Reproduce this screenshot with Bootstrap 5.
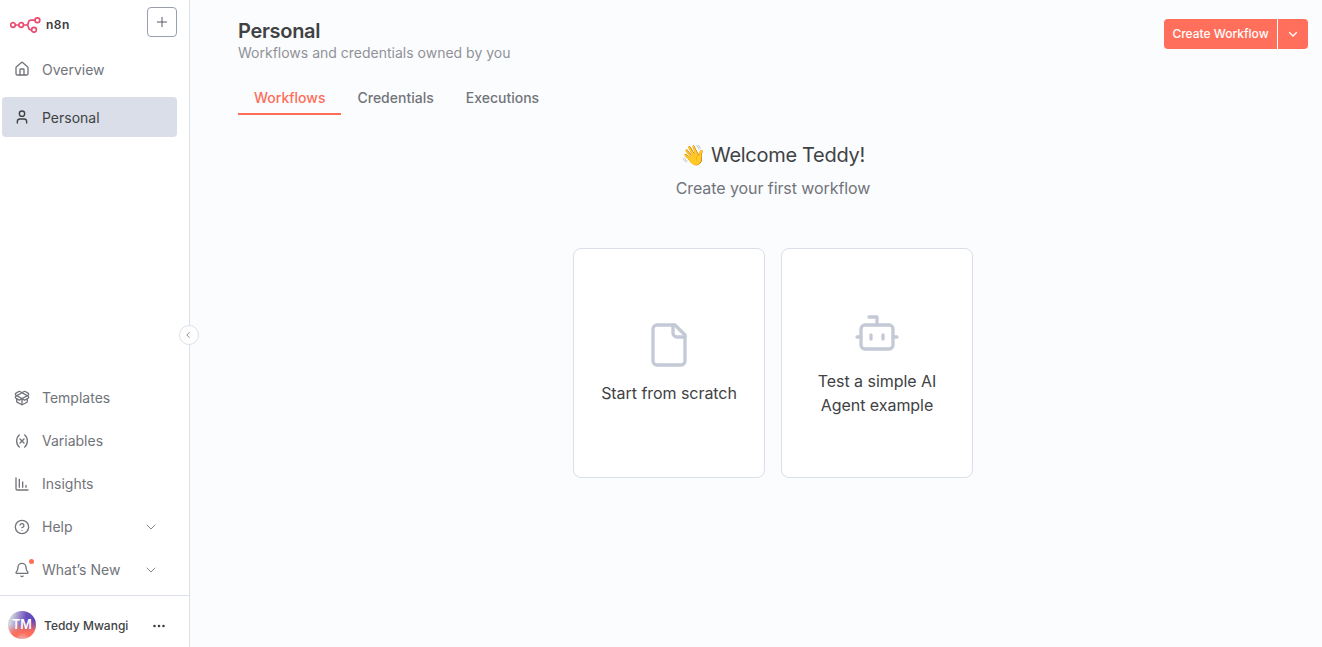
<!DOCTYPE html>
<html lang="en">
<head>
<meta charset="utf-8">
<meta name="viewport" content="width=device-width, initial-scale=1">
<title>n8n - Personal</title>
<link href="https://cdn.jsdelivr.net/npm/bootstrap@5.3.0/dist/css/bootstrap.min.css" rel="stylesheet">
<style>
body{font-family:Inter,"Noto Color Emoji",sans-serif;font-size:14px;line-height:20px;color:#414244;background:#fbfcfe;height:100vh;overflow:hidden}
svg{display:block;flex:none}
.ic{fill:none;stroke:currentColor;stroke-width:1.5;stroke-linecap:round;stroke-linejoin:round}
.side{width:190px;background:#fff;border-right:1px solid #dbdfe7}
.side .ic{stroke-width:2}
.side .chev{stroke-width:1.7}
.side-head{height:49px;padding:7px 12px 0 10px}
.brand-name{font-size:12px;font-weight:600;line-height:16px;letter-spacing:.5px;padding:2px 0 0 5px;color:#3a3b40}
.plus-btn{width:30px;height:30px;border:1px solid #9a9fac;border-radius:4px;background:#fff;color:#555a66;padding:0}
.plus-btn .ic{stroke-width:1.5}
.side-link{height:40px;margin-left:2px;width:175px;padding-left:12px;gap:12px;border-radius:4px;color:#71747a;text-decoration:none}
.side-top .side-link span{padding-top:2px}
.side-link.current{background:#dadee8;color:#414244}
.side-bottom{gap:3px;margin-bottom:5px}
.side-link .chev{margin-left:auto;margin-right:20px}
.dot{position:absolute;width:5px;height:5px;border-radius:50%;background:#ff6d5a;left:15px;top:-3px}
.user-row{height:52px;border-top:1px solid #dbdfe7;padding:7px 24px 0 8px;font-size:12px;font-weight:500}
.user-name,.user-row>svg{position:relative;top:1px}
.avatar{width:28px;height:28px;border-radius:50%;color:#fff;font-weight:600;font-size:12.5px;background:radial-gradient(circle at 52% 108%,#e3c3cb 0,rgba(255,109,90,.9) 26%,transparent 50%),linear-gradient(170deg,transparent 42%,#ff6d5a 78%),linear-gradient(100deg,#d5d6de 12%,#6b4fbb 58%,#5344ba)}
.collapse-btn{position:absolute;left:179px;top:325px;width:20px;height:20px;border:1px solid #dbdfe7;border-radius:50%;background:#fff;color:#71747a;padding:0 2px 0 0}
.main-area{padding:19px 14px 0 48px}
.page-title{font-size:20px;line-height:24px;font-weight:600;letter-spacing:-.3px;margin:0}
.sub{color:#909298}
.tabs-row{margin-top:20px;font-weight:500;color:#71747a}
.tab-item{height:32px;padding:5px 16px 0;border-bottom:2px solid transparent}
.tab-item.current{color:#ff6d5a;border-color:#ff6d5a}
.create{height:30px;gap:1px;font-size:12px}
.create button{border:0;background:#ff6f5c;color:#fff;font-weight:500}
.create button:first-child{width:113px;border-radius:4px 0 0 4px;padding:0}
.create button:last-child{width:30px;border-radius:0 4px 4px 0;padding:0}
.create .ic{stroke-width:2.5}
.welcome{font-size:20px;font-weight:400;line-height:26px;letter-spacing:-.3px;margin:27px 0 0}
.lead-in{font-size:16px;line-height:24px;letter-spacing:-.08px;color:#71747a;margin:8px 0 48px}
.start-card{width:192px;height:230px;border:1px solid #dbdfe7;border-radius:8px;background:#fff;font-size:16px;line-height:24px;letter-spacing:-.05px;gap:12px;padding:0 24px}
.start-card svg{color:#c4c9d6;stroke-width:1.65}
</style>
</head>
<body class="d-flex">
<aside class="side d-flex flex-column flex-shrink-0 position-relative">
  <div class="side-head d-flex justify-content-between align-items-start">
    <div class="d-flex align-items-center mt-2">
      <svg width="31" height="18" viewBox="0 0 31 18" fill="none" stroke="#ea4b71" stroke-width="1.7"><circle cx="3" cy="10" r="2.300"/><circle cx="11.200" cy="10" r="2.300"/><circle cx="27.400" cy="5.200" r="2.400"/><circle cx="24" cy="14.800" r="2.400"/><path d="M5.300 10h3.600M13.500 10h2.700c1.600 0 2-.8 2.200-2l.1-.8C18.800 5.600 19.600 5.200 21 5.200h4M16.200 10c1.600 0 2 .9 2.200 2.200.3 1.900.8 2.600 2.200 2.600h1"/></svg>
      <span class="brand-name">n8n</span>
    </div>
    <button class="plus-btn d-flex align-items-center justify-content-center" aria-label="Add"><svg class="ic" width="16" height="16" viewBox="0 0 24 24"><path d="M5 12h14M12 5v14"/></svg></button>
  </div>
  <nav class="side-top d-flex flex-column gap-2">
    <a class="side-link d-flex align-items-center"><svg class="ic" width="16" height="16" viewBox="0 0 24 24"><path d="M15 21v-8a1 1 0 0 0-1-1h-4a1 1 0 0 0-1 1v8"/><path d="M3 10a2 2 0 0 1 .709-1.528l7-5.999a2 2 0 0 1 2.582 0l7 5.999A2 2 0 0 1 21 10v9a2 2 0 0 1-2 2H5a2 2 0 0 1-2-2z"/></svg><span>Overview</span></a>
    <a class="side-link current d-flex align-items-center"><svg class="ic" width="16" height="16" viewBox="0 0 24 24"><path d="M19 21v-2a4 4 0 0 0-4-4H9a4 4 0 0 0-4 4v2"/><circle cx="12" cy="7" r="4"/></svg><span>Personal</span></a>
  </nav>
  <nav class="side-bottom d-flex flex-column mt-auto">
    <a class="side-link d-flex align-items-center"><svg class="ic" width="16" height="16" viewBox="0 0 24 24"><path d="M12 22v-9"/><path d="M15.170 2.210a1.670 1.670 0 0 1 1.630 0L21 4.570a1.930 1.930 0 0 1 0 3.360L8.820 14.790a1.655 1.655 0 0 1-1.640 0L3 12.430a1.930 1.930 0 0 1 0-3.360z"/><path d="M20 13v3.870a2.060 2.060 0 0 1-1.110 1.830l-6 3.080a1.930 1.930 0 0 1-1.780 0l-6-3.080A2.060 2.060 0 0 1 4 16.870V13"/><path d="M21 12.430a1.930 1.930 0 0 0 0-3.360L8.830 2.200a1.640 1.640 0 0 0-1.630 0L3 4.570a1.930 1.930 0 0 0 0 3.360l12.180 6.860a1.636 1.636 0 0 0 1.630 0z"/></svg>Templates</a>
    <a class="side-link d-flex align-items-center"><svg class="ic" width="16" height="16" viewBox="0 0 24 24"><path d="M8 21s-4-3-4-9 4-9 4-9M16 3s4 3 4 9-4 9-4 9M15 9l-6 6M9 9l6 6"/></svg>Variables</a>
    <a class="side-link d-flex align-items-center"><svg class="ic" width="16" height="16" viewBox="0 0 24 24"><path d="M13 17V9M18 17v-3M3 3v16a2 2 0 0 0 2 2h16M8 17V5"/></svg>Insights</a>
    <a class="side-link d-flex align-items-center"><svg class="ic" width="16" height="16" viewBox="0 0 24 24"><circle cx="12" cy="12" r="10"/><path d="M9.090 9a3 3 0 0 1 5.830 1c0 2-3 3-3 3M12 17h.01"/></svg>Help<svg class="ic chev" width="12" height="12" viewBox="0 0 24 24"><path d="m4 8 8 8 8-8"/></svg></a>
    <a class="side-link d-flex align-items-center"><span class="position-relative"><svg class="ic" width="16" height="16" viewBox="0 0 24 24"><path d="M10.268 21a2 2 0 0 0 3.464 0"/><path d="M3.262 15.326A1 1 0 0 0 4 17h16a1 1 0 0 0 .74-1.673C19.410 13.956 18 12.499 18 8A6 6 0 0 0 6 8c0 4.499-1.411 5.956-2.738 7.326"/></svg><span class="dot"></span></span>What’s New<svg class="ic chev" width="12" height="12" viewBox="0 0 24 24"><path d="m4 8 8 8 8-8"/></svg></a>
  </nav>
  <div class="user-row d-flex align-items-center gap-2">
    <span class="avatar d-flex align-items-center justify-content-center">TM</span>
    <span class="user-name">Teddy Mwangi</span>
    <svg class="ms-auto" width="12" height="12" viewBox="0 0 12 12" fill="currentColor"><circle cx="1.500" cy="6" r="1.300"/><circle cx="6" cy="6" r="1.300"/><circle cx="10.500" cy="6" r="1.300"/></svg>
  </div>
  <button class="collapse-btn d-flex align-items-center justify-content-center" aria-label="Collapse"><svg class="ic" width="10" height="10" viewBox="0 0 24 24"><path d="m15 18-6-6 6-6"/></svg></button>
</aside>
<main class="main-area flex-grow-1">
  <header class="d-flex justify-content-between align-items-start">
    <div><h1 class="page-title">Personal</h1><div class="sub">Workflows and credentials owned by you</div></div>
    <div class="create d-flex">
      <button>Create Workflow</button>
      <button class="d-flex align-items-center justify-content-center" aria-label="More"><svg class="ic" width="12" height="12" viewBox="0 0 24 24"><path d="m5 9 7 7 7-7"/></svg></button>
    </div>
  </header>
  <div class="tabs-row d-flex"><div class="tab-item current">Workflows</div><div class="tab-item">Credentials</div><div class="tab-item">Executions</div></div>
  <section class="d-flex flex-column align-items-center">
    <h2 class="welcome">👋 Welcome Teddy!</h2>
    <p class="lead-in">Create your first workflow</p>
    <div class="d-flex gap-3">
      <div class="start-card d-flex flex-column align-items-center justify-content-center text-center"><svg class="ic" width="48" height="48" viewBox="0 0 24 24"><path d="M15 2H6a2 2 0 0 0-2 2v16a2 2 0 0 0 2 2h12a2 2 0 0 0 2-2V7Z"/><path d="M14 2v4a2 2 0 0 0 2 2h4"/></svg><span>Start from scratch</span></div>
      <div class="start-card d-flex flex-column align-items-center justify-content-center text-center"><svg class="ic" width="48" height="48" viewBox="0 0 24 24"><path d="M12 8V4H8"/><rect width="16" height="12" x="4" y="8" rx="2"/><path d="M2 14h2M20 14h2M15 13v2M9 13v2"/></svg><span>Test a simple AI Agent example</span></div>
    </div>
  </section>
</main>
<script src="https://cdn.jsdelivr.net/npm/bootstrap@5.3.0/dist/js/bootstrap.bundle.min.js"></script>
</body>
</html>
